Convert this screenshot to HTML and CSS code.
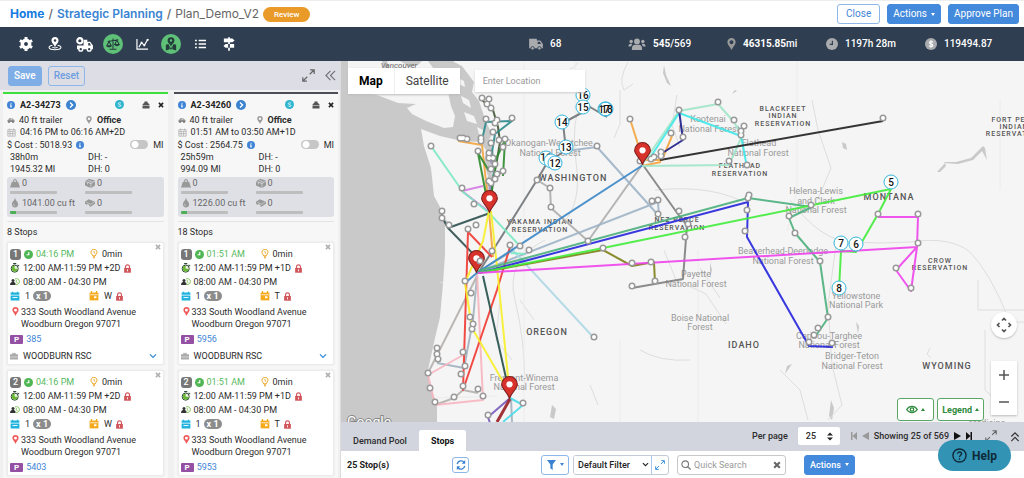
FILE: index.html
```html
<!DOCTYPE html>
<html lang="en">
<head>
<meta charset="utf-8">
<title>Plan_Demo_V2 - Strategic Planning</title>
<link rel="stylesheet" href="styles.css">
</head>
<body>
<svg class="sprite" aria-hidden="true">
  <symbol id="info" viewBox="0 0 16 16"><circle cx="8" cy="8" r="8" fill="#4285d6"/><path d="M6 7h3v4h1v1.500H6V11h1V8.500H6zM7 3.500h2v2H7z" fill="#fff"/></symbol>
  <symbol id="go" viewBox="0 0 16 16"><circle cx="8" cy="8" r="8" fill="#3b82d0"/><path d="M6.500 4l4 4-4 4" fill="none" stroke="#fff" stroke-width="2.200"/></symbol>
  <symbol id="cash" viewBox="0 0 16 16"><circle cx="8" cy="8" r="8" fill="#2fb5cf"/><path d="M10.500 6C10 4.500 6 4.500 6 6.500S10.500 8 10.500 10 6 11.700 5.500 10" fill="none" stroke="#fff" stroke-width="1.500"/></symbol>
  <symbol id="eject" viewBox="0 0 16 16"><path d="M5 3V1h6v2zM1 7l4-4h6l4 4v1.500H1zM1 9.500h14V15H1z" fill="#555"/></symbol>
  <symbol id="x" viewBox="0 0 10 10"><path d="M1.500 1.500l7 7M8.500 1.500l-7 7" stroke="currentColor" stroke-width="2.600"/></symbol>
  <symbol id="car" viewBox="0 0 16 16"><path d="M1 8l2-1 2-3h5l3 3 2 1v4H1z" fill="#909090"/><path d="M5 7l1-2h1v2zM8 5h2l1 2H8z" fill="#fff"/><circle cx="4" cy="12" r="2" fill="#777"/><circle cx="12" cy="12" r="2" fill="#777"/></symbol>
  <symbol id="pin" viewBox="0 0 12 16"><path fill-rule="evenodd" d="M6 0a5.500 5.500 0 0 1 5.500 5.500C11.500 9 7.500 12 6 16 4.500 12 .5 9 .5 5.500A5.500 5.500 0 0 1 6 0zm0 3a2.600 2.600 0 1 0 0 5.200A2.600 2.600 0 0 0 6 3z" fill="currentColor"/></symbol>
  <symbol id="cal" viewBox="0 0 16 16"><path d="M1.500 3h13v11.500h-13zM1.500 6h13M5.500 6v8M10 6v8M1.500 10h13M4.500 1v3M11.500 1v3" fill="none" stroke="#aaa" stroke-width="1.300"/></symbol>
  <symbol id="weight" viewBox="0 0 16 16"><path fill-rule="evenodd" d="M3 6h2a3.200 3.200 0 1 1 6 0h2l3 9H0zM8 3.500A1.500 1.500 0 0 0 6.600 6h2.800A1.500 1.500 0 0 0 8 3.500z" fill="#999"/></symbol>
  <symbol id="cube" viewBox="0 0 16 16"><path d="M0 5l6-4 10 3-6 4zM0 6l9 3v7l-9-4zM10 9l6-4v7l-6 4z" fill="#999"/><path d="M4 7v3M4 3.500l8 3" stroke="#dfe0e6"/></symbol>
  <symbol id="drop" viewBox="0 0 16 16"><path d="M8 0c1 4 5 6 5 10A5 5 0 0 1 3 10C3 6 7 4 8 0z" fill="#999"/><path d="M5.500 9.500c0 2 1 3 2.500 3" fill="none" stroke="#ddd"/></symbol>
  <symbol id="pallet" viewBox="0 0 16 16"><path d="M0 6l6-4 10 4v3l-7 5-2-1V11L3 9.500V11L0 9z" fill="#999"/><path d="M2 7l7 3 6-4" fill="none" stroke="#ddd"/></symbol>
  <symbol id="clock" viewBox="0 0 16 16"><circle cx="8" cy="8" r="8" fill="#4fb653"/><path d="M8.500 3.500v5H4.500" fill="none" stroke="#fff" stroke-width="2"/></symbol>
  <symbol id="wait" viewBox="0 0 12 16"><path d="M3 9C1 7 1 5 1.500 3.500 3-.5 9-.5 10.500 3.500 11 6 10.500 7 9 9l-1 2H4z" fill="#fff" stroke="#e9a21b" stroke-width="1.600"/><path d="M6 3v3l2 1" fill="none" stroke="#e9a21b" stroke-width="1.400"/><path d="M4 12h4l-2 4z" fill="#e9a21b"/></symbol>
  <symbol id="watch" viewBox="0 0 16 16"><circle cx="7.500" cy="9" r="5.700" fill="#eef5e0" stroke="#2f4a3a" stroke-width="1.600"/><path d="M7.500 9V4.500A4.500 4.500 0 1 0 12 9z" fill="#67b832"/><path d="M5 1h5M12 3l2.500 2" stroke="#2f4a3a" stroke-width="2"/></symbol>
  <symbol id="shift" viewBox="0 0 20 16"><circle cx="6" cy="5" r="3" fill="#333"/><path d="M0 14c0-5 3-6 6-6s4 1 5 3v3z" fill="#333"/><path d="M10 2a6 6 0 1 1 1 11" fill="none" stroke="#6ab834" stroke-width="1.600"/><path d="M12.500 4v4l3 2" fill="none" stroke="#6ab834" stroke-width="1.400"/></symbol>
  <symbol id="day" viewBox="0 0 16 16"><path d="M1 2.500h14V6H1zM1 7h14v8H1z" fill="#1fb2de"/><path d="M4 1v2M12 1v2" stroke="#1fb2de" stroke-width="2"/><path d="M4 10.500h8" stroke="#fff" stroke-width="1.500"/></symbol>
  <symbol id="week" viewBox="0 0 16 16"><path d="M1 2.500h14V15H1z" fill="#f5aa1c"/><path d="M4 0v3M12 0v3" stroke="#f5aa1c" stroke-width="2"/><path d="M2 6h12" stroke="#fff" stroke-width="1.200"/><path d="M8 8.500h4v3H8z" fill="#fff"/></symbol>
  <symbol id="lock" viewBox="0 0 14 16"><path d="M3.500 8V5a3.500 3.500 0 0 1 7 0v3" fill="none" stroke="#d0565c" stroke-width="2"/><path d="M1 7h12v8.500H1z" fill="#d0565c"/><path d="M7 9.500v3.500" stroke="#fff" stroke-width="1.600"/></symbol>
  <symbol id="case" viewBox="0 0 16 16"><path d="M5 5V2.500h6V5M0 9V5h16v4z" fill="#aaa" stroke="#aaa"/><path d="M0 10.500h16V15H0z" fill="#aaa"/></symbol>
  <symbol id="down" viewBox="0 0 12 8"><path d="M1.500 1.500L6 6l4.500-4.500" fill="none" stroke="currentColor" stroke-width="1.800"/></symbol>
  <symbol id="expand" viewBox="0 0 16 16"><path d="M9.500 6.500L14.500 1.500M10 1h5v5M6.500 9.500l-5 5M6 15H1v-5" fill="none" stroke="currentColor" stroke-width="1.500"/></symbol>
  <symbol id="marker" viewBox="0 0 16 22"><path d="M8 .5A7.500 7.500 0 0 1 15.500 8c0 4.500-5.500 7-7.500 13.500C6 15 .5 12.500.5 8A7.500 7.500 0 0 1 8 .5z" fill="#d8322c" stroke="#7c1e1c"/><circle cx="8" cy="8" r="3" fill="#fff"/></symbol>
</svg>

<header class="top">
  <nav class="crumbs" aria-label="Breadcrumb">
    <a href="#" class="home">Home</a><span>/</span><a href="#">Strategic Planning</a><span>/</span><span class="plan">Plan_Demo_V2</span><span class="pill">Review</span>
  </nav>
  <div class="top-actions">
    <button class="btn outline">Close</button>
    <button class="btn solid">Actions <i class="caret"></i></button>
    <button class="btn solid">Approve Plan</button>
  </div>
</header>

<section class="bar">
  <nav class="tools" aria-label="Views">
    <button aria-label="Settings"><svg width="14" height="14" viewBox="0 0 16 16"><path fill="none" stroke="#fff" stroke-width="4" d="M8 3.800a4.200 4.200 0 1 0 .01 0z"/><path d="M8 0v3M8 13v3M1 4l2.700 1.500M12.300 10.500L15 12M1 12l2.700-1.500M12.300 5.500L15 4" stroke="#fff" stroke-width="3.400"/></svg></button>
    <button aria-label="Locations"><svg width="14" height="14" viewBox="0 0 16 16"><path fill-rule="evenodd" d="M8 0a4 4 0 0 1 4 4c0 3-3 4-4 8-1-4-4-5-4-8a4 4 0 0 1 4-4zm0 2.500a1.500 1.500 0 1 0 0 3 1.500 1.500 0 0 0 0-3z" fill="#fff"/><path d="M5 9.500c-6 1-5 5 3 5s9-4 3-5M5 11.500c1 1.400 5 1.400 6 0" fill="none" stroke="#fff" stroke-width="1.200"/></svg></button>
    <button aria-label="Trucks"><svg width="17" height="15" viewBox="0 0 18 16"><circle cx="4" cy="4" r="2.800" fill="none" stroke="#fff" stroke-width="2.200"/><path d="M8 3h4v2h3l3 4v4H1V9h7z" fill="#fff"/><path d="M13 6.500h1.500L16 9h-3z" fill="#2f3e50"/><circle cx="5" cy="13" r="2" fill="#2f3e50" stroke="#fff" stroke-width="1.500"/><circle cx="14" cy="13" r="2" fill="#2f3e50" stroke="#fff" stroke-width="1.500"/></svg></button>
    <button class="on" aria-label="Balance"><svg width="14" height="13" viewBox="0 0 16 14"><path d="M8 0v12M4 12.500h8M2 3.500l12-2M3.500 3.500L1 8.500h5zM12.500 2L10 7h5z" fill="none" stroke="#243c3c" stroke-width="1.200"/><path d="M.5 8.500h6c-1 2.500-5 2.500-6 0zM9.500 7h6c-1 2.500-5 2.500-6 0z" fill="#243c3c"/></svg></button>
    <button aria-label="Charts"><svg width="13" height="12" viewBox="0 0 14 13"><path d="M1 1v11h12M3 10l3-5 3 3 4-7" fill="none" stroke="#fff" stroke-width="1.300"/><path d="M5 4h2v2H5zM8 7h2v2H8zM11.500 1h2v2h-2z" fill="#fff"/></svg></button>
    <button class="on" aria-label="Map"><svg width="12" height="14" viewBox="0 0 14 16"><path fill-rule="evenodd" d="M7 0a4 4 0 0 1 4 4c0 3-3 4-4 7-1-3-4-4-4-7a4 4 0 0 1 4-4zm0 2.500a1.500 1.500 0 1 0 0 3 1.500 1.500 0 0 0 0-3z" fill="#243c3c"/><path d="M1 9l3-1 1.500 3v3L1 15.500zM8.500 11L10 8l3 1v6.500L8.500 14zM6 12h2v2H6z" fill="#243c3c"/></svg></button>
    <button aria-label="List"><svg width="11" height="10" viewBox="0 0 12 10"><path d="M0 1.200h2M0 5h2M0 8.800h2M4 1.200h8M4 5h8M4 8.800h8" stroke="#fff" stroke-width="1.700"/></svg></button>
    <button aria-label="Directions"><svg width="12" height="14" viewBox="0 0 14 16"><path d="M6 0h2v16H6zM1 1.500h10l2.500 2.300L11 6H1zM13 8H3L.5 10.200 3 12.500h10z" fill="#fff"/></svg></button>
  </nav>
  <ul class="stats">
    <li><svg width="14" height="12" viewBox="0 0 16 14"><path fill-rule="evenodd" d="M0 1h9v2h4l3 4v5H0zm10 3.500V7h4l-1.700-2.500z" fill="#a9abae"/><circle cx="4" cy="12" r="2" fill="#a9abae" stroke="#2f3e50"/><circle cx="12" cy="12" r="2" fill="#a9abae" stroke="#2f3e50"/></svg><span>68</span></li>
    <li><svg width="18" height="12" viewBox="0 0 20 14"><g fill="#a9abae"><circle cx="10" cy="4" r="3.400"/><circle cx="3.200" cy="4" r="2"/><circle cx="16.800" cy="4" r="2"/><path d="M4 14c0-6 2-6 6-6s6 0 6 6zM0 10c0-3 2-3.500 4.500-3L3 10zM20 10c0-3-2-3.500-4.500-3L17 10z"/></g></svg><span><b>545</b>/569</span></li>
    <li><svg class="grey" width="9" height="12"><use href="#pin"/></svg><span><b>46315.85</b>mi</span></li>
    <li><svg width="12" height="12" viewBox="0 0 16 16"><circle cx="8" cy="8" r="8" fill="#a9abae"/><path d="M8.500 3.500v5H5" fill="none" stroke="#2f3e50" stroke-width="1.600"/></svg><span>1197h 28m</span></li>
    <li><svg width="12" height="12" viewBox="0 0 16 16"><circle cx="8" cy="8" r="8" fill="#a9abae"/><path d="M10.500 6C10 4.300 5.800 4.300 5.800 6.300S10.500 8 10.500 10 6 11.700 5.500 10M8 3v10" fill="none" stroke="#fff" stroke-width="1.400"/></svg><span>119494.87</span></li>
  </ul>
</section>

<main class="work">
  <aside class="side">
    <div class="side-bar">
      <button class="btn save">Save</button>
      <button class="btn reset">Reset</button>
      <button class="icon push" aria-label="Expand"><svg width="13" height="13"><use href="#expand"/></svg></button>
      <button class="icon" aria-label="Collapse"><svg width="11" height="11" viewBox="0 0 12 12"><path d="M6 1L1 6l5 5M11 1L6 6l5 5" fill="none" stroke="#71747b" stroke-width="1.300"/></svg></button>
    </div>
    <div class="routes">
      <article class="route green">
        <div class="summary">
          <h2 class="line title"><svg class="s8"><use href="#info"/></svg><span>A2-34273</span><svg class="s10"><use href="#go"/></svg><svg class="s9 push"><use href="#cash"/></svg><svg class="s8 gap"><use href="#eject"/></svg><button class="icon" aria-label="Close route"><svg class="s6"><use href="#x"/></svg></button></h2>
          <p class="pair"><span class="line"><svg class="s8"><use href="#car"/></svg>40 ft trailer</span><span class="line"><svg class="s8 grey"><use href="#pin"/></svg><b>Office</b></span></p>
          <p class="line"><svg class="s9"><use href="#cal"/></svg>04:16 PM to 06:16 AM+2D</p>
          <div class="line cost">$ Cost : 5018.93 <svg class="s8"><use href="#info"/></svg><label class="push switch"><input type="checkbox"><span>MI</span></label></div>
          <p class="pair inset"><span>38h0m</span><span>DH: -</span></p>
          <p class="pair inset"><span>1945.32 MI</span><span>DH: 0</span></p>
          <div class="loads">
            <div class="load"><svg class="s10"><use href="#weight"/></svg><span>0</span><i></i></div>
            <div class="load"><svg class="s10"><use href="#cube"/></svg><span>0</span><i></i></div>
            <div class="load part"><svg class="s10"><use href="#drop"/></svg><span>1041.00 cu ft</span><i></i></div>
            <div class="load"><svg class="s10"><use href="#pallet"/></svg><span>0</span><i></i></div>
          </div>
          <p class="count">8 Stops</p>
        </div>
        <section class="stop">
          <div class="pair"><span class="line"><b class="num">1</b><svg class="s9"><use href="#clock"/></svg><span class="eta">04:16 PM</span></span><span class="line"><svg class="s10"><use href="#wait"/></svg>0min</span></div>
          <p class="line"><svg class="s10"><use href="#watch"/></svg>12:00 AM-11:59 PM +2D<svg class="s9"><use href="#lock"/></svg></p>
          <p class="line"><svg class="s10"><use href="#shift"/></svg>08:00 AM - 04:30 PM</p>
          <div class="pair"><span class="line"><svg class="s10"><use href="#day"/></svg><span>1</span><b class="times">x 1</b></span><span class="line"><svg class="s10"><use href="#week"/></svg><span>W</span><svg class="s9"><use href="#lock"/></svg></span></div>
          <address><svg class="s9"><use href="#pin"/></svg><span>333 South Woodland Avenue<br>Woodburn Oregon 97071</span></address>
          <p class="line"><b class="tag">P</b><a href="#">385</a></p>
          <p class="line site"><svg class="s8"><use href="#case"/></svg><span>WOODBURN RSC</span><button class="icon push blue" aria-label="More"><svg width="8" height="6"><use href="#down"/></svg></button></p>
          <button class="icon shut" aria-label="Remove stop"><svg class="s6"><use href="#x"/></svg></button>
        </section>
        <section class="stop">
          <div class="pair"><span class="line"><b class="num">2</b><svg class="s9"><use href="#clock"/></svg><span class="eta">04:16 PM</span></span><span class="line"><svg class="s10"><use href="#wait"/></svg>0min</span></div>
          <p class="line"><svg class="s10"><use href="#watch"/></svg>12:00 AM-11:59 PM +2D<svg class="s9"><use href="#lock"/></svg></p>
          <p class="line"><svg class="s10"><use href="#shift"/></svg>08:00 AM - 04:30 PM</p>
          <div class="pair"><span class="line"><svg class="s10"><use href="#day"/></svg><span>1</span><b class="times">x 1</b></span><span class="line"><svg class="s10"><use href="#week"/></svg><span>W</span><svg class="s9"><use href="#lock"/></svg></span></div>
          <address><svg class="s9"><use href="#pin"/></svg><span>333 South Woodland Avenue<br>Woodburn Oregon 97071</span></address>
          <p class="line"><b class="tag">P</b><a href="#">5403</a></p>
          <button class="icon shut" aria-label="Remove stop"><svg class="s6"><use href="#x"/></svg></button>
        </section>
      </article>
      <article class="route dark">
        <div class="summary">
          <h2 class="line title"><svg class="s8"><use href="#info"/></svg><span>A2-34260</span><svg class="s10"><use href="#go"/></svg><svg class="s9 push"><use href="#cash"/></svg><svg class="s8 gap"><use href="#eject"/></svg><button class="icon" aria-label="Close route"><svg class="s6"><use href="#x"/></svg></button></h2>
          <p class="pair"><span class="line"><svg class="s8"><use href="#car"/></svg>40 ft trailer</span><span class="line"><svg class="s8 grey"><use href="#pin"/></svg><b>Office</b></span></p>
          <p class="line"><svg class="s9"><use href="#cal"/></svg>01:51 AM to 03:50 AM+1D</p>
          <div class="line cost">$ Cost : 2564.75 <svg class="s8"><use href="#info"/></svg><label class="push switch"><input type="checkbox"><span>MI</span></label></div>
          <p class="pair inset"><span>25h59m</span><span>DH: -</span></p>
          <p class="pair inset"><span>994.09 MI</span><span>DH: 0</span></p>
          <div class="loads">
            <div class="load"><svg class="s10"><use href="#weight"/></svg><span>0</span><i></i></div>
            <div class="load"><svg class="s10"><use href="#cube"/></svg><span>0</span><i></i></div>
            <div class="load part"><svg class="s10"><use href="#drop"/></svg><span>1226.00 cu ft</span><i></i></div>
            <div class="load"><svg class="s10"><use href="#pallet"/></svg><span>0</span><i></i></div>
          </div>
          <p class="count">18 Stops</p>
        </div>
        <section class="stop">
          <div class="pair"><span class="line"><b class="num">1</b><svg class="s9"><use href="#clock"/></svg><span class="eta">01:51 AM</span></span><span class="line"><svg class="s10"><use href="#wait"/></svg>0min</span></div>
          <p class="line"><svg class="s10"><use href="#watch"/></svg>12:00 AM-11:59 PM +1D<svg class="s9"><use href="#lock"/></svg></p>
          <p class="line"><svg class="s10"><use href="#shift"/></svg>08:00 AM - 04:30 PM</p>
          <div class="pair"><span class="line"><svg class="s10"><use href="#day"/></svg><span>1</span><b class="times">x 1</b></span><span class="line"><svg class="s10"><use href="#week"/></svg><span>T</span><svg class="s9"><use href="#lock"/></svg></span></div>
          <address><svg class="s9"><use href="#pin"/></svg><span>333 South Woodland Avenue<br>Woodburn Oregon 97071</span></address>
          <p class="line"><b class="tag">P</b><a href="#">5956</a></p>
          <p class="line site"><svg class="s8"><use href="#case"/></svg><span>WOODBURN RSC</span><button class="icon push blue" aria-label="More"><svg width="8" height="6"><use href="#down"/></svg></button></p>
          <button class="icon shut" aria-label="Remove stop"><svg class="s6"><use href="#x"/></svg></button>
        </section>
        <section class="stop">
          <div class="pair"><span class="line"><b class="num">2</b><svg class="s9"><use href="#clock"/></svg><span class="eta">01:51 AM</span></span><span class="line"><svg class="s10"><use href="#wait"/></svg>0min</span></div>
          <p class="line"><svg class="s10"><use href="#watch"/></svg>12:00 AM-11:59 PM +1D<svg class="s9"><use href="#lock"/></svg></p>
          <p class="line"><svg class="s10"><use href="#shift"/></svg>08:00 AM - 04:30 PM</p>
          <div class="pair"><span class="line"><svg class="s10"><use href="#day"/></svg><span>1</span><b class="times">x 1</b></span><span class="line"><svg class="s10"><use href="#week"/></svg><span>T</span><svg class="s9"><use href="#lock"/></svg></span></div>
          <address><svg class="s9"><use href="#pin"/></svg><span>333 South Woodland Avenue<br>Woodburn Oregon 97071</span></address>
          <p class="line"><b class="tag">P</b><a href="#">5953</a></p>
          <button class="icon shut" aria-label="Remove stop"><svg class="s6"><use href="#x"/></svg></button>
        </section>
      </article>
    </div>
  </aside>

  <section class="content">
    <div class="map">
      <svg class="canvas" viewBox="341 61 683 361" preserveAspectRatio="xMinYMin slice" role="img" aria-label="Route map">
        <path fill="#f5f5f5" d="M341 61h683v361H341z"/>
        <path class="sea" d="M341 61H452L462 66 468 74 474 82 472 92 479 101 482 110 486 122 492 134 488 142 494 152 490 168 494 182 490 196 486 190 488 176 484 164 486 150 480 142 462 141 440 136 421 129 424 146 431 168 434 196 440 207 443 218 449 222 445 226 445 254 443 284 440 317 435 338 428 370 430 386 437 404 437 422H341z"/>
        <path class="land" d="M348 61H428L436 72 440 84 448 92 451 106 455 116 453 127 444 128 426 121 412 114 407 108 416 104 398 103 377 95 348 90zM458 78l6 3 1 6-6-3zM461 96l8 4 2 8-8-5zM464 112l10 4 3 8-10-3zM477 127l6 3 1 6-5-2z"/>
        <path class="sea" d="M382 61l2 8 5-2-2-6zM400 61l10 6 8-2 4-4zM431 62l8 8 12-3 3-6zM552 405l4 4-2 10-4-2zM710 262l2 8-2 8zM831 400l3 8-2 12-3-4zM856 322l3 4-1 8zM787 366l5-2-7 10zM937 172l8-9 1 3-6 6zM945 162l11 0 15-4 12-12 2 2 2 12-5-9-9 9-15 4-14-1zM664 65l2 10 5 11-4-3-4-10zM842 142l4 2 1 6-4-2zM735 90l-3 4 5-3z"/>
        <g class="hair">
          <path d="M628 62q-10 18-4 28l9-6M578 62q-5 8-8 6M584 92q-14 30-8 70t-12 60M677 95l-5 30 8 22M620 90v34l-6 14M655 190q60-6 96 16M790 200q30 40 60 42t60 0q40-6 60 10 20 20 40 70h34M812 100l6 30 13 38-10 24-10 20M836 245l-8 60 4 60 10 40-14 15M1024 310h-46v-30M985 330v60l16 15M700 268l20 30M590 385l8 20M520 300l14 20M545 240q-40 20-30 60t10 90M664 250l12 30 30 14 20 30M640 350q20 12 50 10M780 370l20 20 8 30M930 348l-3 6 4 4M500 300l-4 40 16 20M443 283l-3-1"/>
          <path class="pale" d="M524 61v361M575 61v60M797 61v130l-10 40M698 250v172M437 398l60-2M620 422V340M1000 100v90"/>
        </g>
        <g class="park">
          <text x="549" y="146">Okanogan-Wenatchee</text><text x="550" y="156">National Forest</text>
          <text x="708" y="122">Kootenai</text><text x="709" y="132">National Forest</text>
          <text x="759" y="146">Flathead</text><text x="758" y="156">National Forest</text>
          <text x="816" y="194">Helena-Lewis</text><text x="816" y="204">and Clark</text><text x="816" y="213">National Forest</text>
          <text x="783" y="254">Beaverhead-Deerlodge</text><text x="783" y="264">National Forest</text>
          <text x="696" y="277">Payette</text><text x="696" y="287">National Forest</text>
          <text x="700" y="321">Boise National</text><text x="700" y="330">Forest</text>
          <text x="856" y="299">Yellowstone</text><text x="856" y="308">National Park</text>
          <text x="829" y="339">Caribou-Targhee</text><text x="829" y="348">National Forest</text>
          <text x="852" y="359">Bridger-Teton</text><text x="852" y="369">National Forest</text>
          <text x="524" y="381">Fremont-Winema</text><text x="524" y="390">National Forest</text>
          <text x="987" y="426">Medicine</text>
        </g>
        <g class="reserve">
          <text x="783" y="111">BLACKFEET</text><text x="783" y="118">INDIAN</text><text x="783" y="126">RESERVATION</text>
          <text x="740" y="168">FLATHEAD</text><text x="740" y="176">RESERVATION</text>
          <text x="540" y="224">YAKAMA INDIAN</text><text x="540" y="232">RESERVATION</text>
          <text x="677" y="222">NEZ PERCE</text><text x="677" y="230">RESERVATION</text>
          <text x="940" y="263">CROW</text><text x="940" y="270">RESERVATION</text>
          <text x="1014" y="122">FORT PECK</text><text x="1014" y="129">INDIAN</text><text x="1014" y="136">RESERVATION</text>
        </g>
        <g class="state">
          <text x="573" y="181">WASHINGTON</text><text x="547" y="335">OREGON</text><text x="744" y="348">IDAHO</text><text x="889" y="200">MONTANA</text><text x="947" y="369">WYOMING</text>
        </g>
        <text class="city" x="399" y="68">Vancouver</text>
        <text class="google" x="347" y="427">Google</text>
        <g class="lines">
          <path stroke="#adadad" d="M537 180L550 188 551 208 588 241 642 165"/>
          <path stroke="#707478" d="M480 270L495 247 537 180 547 163 566 150 563 123 585 111 590 107 607 117"/>
          <path stroke="#9fb4c8" d="M566 151L597 147 659 216 658 202 478 272M514 250L478 272"/>
          <path stroke="#b5b0ad" d="M477 276L428 373M463 390L478 393M463 390L454 398 435 405"/>
          <path stroke="#a2b2bf" d="M477 276L473 320 464 368 437 363M511 398L512 422"/>
          <path stroke="#f7b5c0" d="M477 272L483 400 435 405 428 375 463 355"/>
          <path stroke="#add8e6" d="M509 246L594 338"/>
          <path stroke="#2f4f4f" d="M442 211L442 217 448 228 490 213M448 228L481 262"/>
          <path stroke="#3d5631" d="M482 100L493 110 498 127 500 142 497 160 492 184 490 210"/>
          <path stroke="#2d8a8b" d="M482 140L486 122 512 121 495 134 492 152 494 170 490 205"/>
          <path stroke="#9d8bc9" d="M488 157L493 165 495 175 490 185 491 208"/>
          <path stroke="#f3a43d" d="M458 141L482 145 488 200 493 257M630 119L643 160 662 160 672 136M642 166L661 162"/>
          <path stroke="#2d8a2c" d="M489 210L478 153 489 171M505 140L503 176M505 140L497 157 489 210"/>
          <path stroke="#d57be5" d="M483 186L462 191 488 211"/>
          <path stroke="#7be9c3" d="M431 146L463 192 488 212 520 246M511 253L525 254"/>
          <path stroke="#ef3832" d="M492 257L468 232 463 390 497 290 510 247"/>
          <path stroke="#f7ef28" d="M489 211L483 241 465 283 472 328 505 385M491 211L497 267 510 397"/>
          <path stroke="#234f49" d="M483 276L506 378 510 397"/>
          <path stroke="#808080" d="M643 165L680 217 687 225 683 279 632 288"/>
          <path stroke="#808018" d="M478 273L603 250 632 266 654 262 655 283"/>
          <path stroke="#3b87c6" d="M465 283L478 272 643 165"/>
          <path stroke="#4aaf7c" d="M478 271L748 198 812 207 789 218 795 233 820 262 828 318 815 337"/>
          <path stroke="#2525dd" d="M479 273L748 202 747 237 809 346 833 347"/>
          <path stroke="#42ec3c" d="M478 273L603 248 891 189 878 214 859 247 856 252 841 251 839 290"/>
          <path stroke="#ee42ec" d="M478 273L917 247 918 217 878 217M917 247L896 270 911 291 917 247"/>
          <path stroke="#a0e6c8" d="M644 162L679 111 718 104 734 122 742 136 729 165 642 166"/>
          <path stroke="#3fe8e8" d="M650 158L679 113 741 136 747 167"/>
          <path stroke="#1c1c8c" d="M679 110L683 140 664 152"/>
          <path stroke="#202020" d="M660 160L883 121"/>
          <path stroke="#48dbe9" d="M510 398L523 405 503 422"/>
          <path stroke="#7659bd" d="M509 399L488 417 490 423"/>
          <path class="thick" stroke="#971f24" d="M510 399L497 422"/>
        </g>
        <path id="stops" class="dots" d="M482 98h0M489 99h0M487 104h0M491 108h0M486 119h0M497 120h0M495 123h0M512 118h0M460 138h0M463 138h0M467 139h0M481 138h0M481 141h0M493 132h0M499 140h0M505 139h0M503 147h0M491 143h0M478 151h0M489 153h0M489 158h0M493 158h0M495 164h0M491 169h0M503 171h0M497 174h0M489 181h0M495 179h0M491 183h0M431 146h0M462 188h0M474 204h0M442 211h0M442 218h0M449 225h0M468 229h0M476 225h0M492 251h0M510 245h0M520 246h0M529 250h0M465 281h0M471 293h0M470 317h0M473 324h0M472 329h0M463 352h0M465 366h0M461 374h0M463 386h0M437 348h0M437 354h0M438 359h0M428 373h0M430 388h0M435 402h0M454 397h0M478 389h0M483 396h0M523 403h0M488 415h0M537 180h0M550 188h0M551 207h0M588 241h0M603 248h0M597 146h0M652 201h0M658 200h0M658 214h0M630 119h0M671 133h0M683 137h0M679 110h0M718 102h0M734 120h0M744 126h0M741 131h0M741 135h0M729 161h0M747 165h0M661 152h0M661 156h0M654 157h0M651 159h0M640 161h0M679 211h0M688 224h0M685 237h0M632 263h0M651 262h0M655 281h0M632 286h0M749 195h0M748 198h0M747 210h0M745 231h0M811 205h0M789 216h0M795 233h0M820 261h0M828 317h0M818 328h0M814 335h0M809 342h0M832 343h0M878 214h0M918 214h0M918 243h0M896 268h0M911 288h0M883 118h0M594 337h0"/>
        <path class="dots in" d="M482 98h0M489 99h0M487 104h0M491 108h0M486 119h0M497 120h0M495 123h0M512 118h0M460 138h0M463 138h0M467 139h0M481 138h0M481 141h0M493 132h0M499 140h0M505 139h0M503 147h0M491 143h0M478 151h0M489 153h0M489 158h0M493 158h0M495 164h0M491 169h0M503 171h0M497 174h0M489 181h0M495 179h0M491 183h0M431 146h0M462 188h0M474 204h0M442 211h0M442 218h0M449 225h0M468 229h0M476 225h0M492 251h0M510 245h0M520 246h0M529 250h0M465 281h0M471 293h0M470 317h0M473 324h0M472 329h0M463 352h0M465 366h0M461 374h0M463 386h0M437 348h0M437 354h0M438 359h0M428 373h0M430 388h0M435 402h0M454 397h0M478 389h0M483 396h0M523 403h0M488 415h0M537 180h0M550 188h0M551 207h0M588 241h0M603 248h0M597 146h0M652 201h0M658 200h0M658 214h0M630 119h0M671 133h0M683 137h0M679 110h0M718 102h0M734 120h0M744 126h0M741 131h0M741 135h0M729 161h0M747 165h0M661 152h0M661 156h0M654 157h0M651 159h0M640 161h0M679 211h0M688 224h0M685 237h0M632 263h0M651 262h0M655 281h0M632 286h0M749 195h0M748 198h0M747 210h0M745 231h0M811 205h0M789 216h0M795 233h0M820 261h0M828 317h0M818 328h0M814 335h0M809 342h0M832 343h0M878 214h0M918 214h0M918 243h0M896 268h0M911 288h0M883 118h0M594 337h0"/>
        <g class="seq">
          <circle cx="583" cy="95" r="7"/><text x="583" y="99">16</text>
          <circle cx="583" cy="107" r="7"/><text x="583" y="111">15</text>
          <circle cx="605" cy="109" r="7"/><text x="604" y="113">17</text>
          <circle class="ring" cx="606" cy="109" r="7"/><text x="607" y="113">18</text>
          <circle cx="562" cy="122" r="7"/><text x="562" y="126">14</text>
          <circle cx="546" cy="158" r="7"/><text x="546" y="161">11</text>
          <circle cx="551" cy="161" r="7"/>
          <circle cx="555" cy="163" r="7"/><text x="555" y="167">12</text>
          <circle cx="566" cy="147" r="7"/><text x="566" y="151">13</text>
          <circle cx="891" cy="182" r="7"/><text x="891" y="186">5</text>
          <circle cx="856" cy="244" r="7"/><text x="856" y="248">6</text>
          <circle cx="841" cy="243" r="7"/><text x="841" y="247">7</text>
          <circle cx="839" cy="288" r="7"/><text x="839" y="292">8</text>
        </g>
        <use href="#marker" x="481" y="190" width="17" height="23"/>
        <use href="#marker" x="468" y="250" width="17" height="23"/>
        <use href="#marker" x="634" y="142" width="17" height="23"/>
        <use href="#marker" x="501" y="376" width="17" height="23"/>
        <path class="dots" d="M480 261h0"/><path class="dots in" d="M480 261h0"/>
      </svg>
      <div class="map-top">
        <div class="types"><button class="active">Map</button><button>Satellite</button></div>
        <input class="find" type="text" placeholder="Enter Location" aria-label="Enter Location">
      </div>
      <div class="map-end">
        <button class="key eye" aria-label="Visibility"><svg width="12" height="9" viewBox="0 0 14 10"><path d="M.8 5C4 .2 10 .2 13.200 5 10 9.800 4 9.800.8 5z" fill="none" stroke="#2e8b3d" stroke-width="1.500"/><circle cx="7" cy="5" r="2" fill="none" stroke="#2e8b3d" stroke-width="1.500"/></svg><i class="caret up"></i></button>
        <button class="key">Legend <i class="caret up"></i></button>
        <div class="zoom">
          <button class="round" aria-label="Pan"><svg width="16" height="16" viewBox="0 0 16 16"><path d="M6 3.500l2-2 2 2M6 12.500l2 2 2-2M3.500 6l-2 2 2 2M12.500 6l2 2-2 2" fill="none" stroke="#555" stroke-width="1.700"/></svg></button>
          <div class="steps"><button aria-label="Zoom in"><svg width="12" height="12" viewBox="0 0 12 12"><path d="M6 1v10M1 6h10" stroke="#555" stroke-width="1.500"/></svg></button><button aria-label="Zoom out"><svg width="12" height="12" viewBox="0 0 12 12"><path d="M1 6h10" stroke="#555" stroke-width="1.500"/></svg></button></div>
        </div>
      </div>
    </div>

    <div class="tabs">
      <button class="tab">Demand Pool</button>
      <button class="tab current">Stops</button>
      <div class="pager">
        <label for="per">Per page</label>
        <span class="field per"><select id="per"><option>25</option></select><svg width="6" height="9" viewBox="0 0 6 9"><path d="M0 3.500l3-3 3 3zM0 5.500l3 3 3-3z" fill="#222"/></svg></span>
        <button class="icon" aria-label="First page"><svg width="6" height="8" viewBox="0 0 6 8"><path d="M0 0h1.500v8H0zM6 0v8L1.500 4z" fill="#999"/></svg></button>
        <button class="icon" aria-label="Previous page"><svg width="7" height="8" viewBox="0 0 7 8"><path d="M7 0v8L0 4z" fill="#999"/></svg></button>
        <span class="shown">Showing 25 of 569</span>
        <button class="icon" aria-label="Next page"><svg width="7" height="8" viewBox="0 0 7 8"><path d="M0 0v8l7-4z" fill="#111"/></svg></button>
        <button class="icon" aria-label="Last page"><svg width="6" height="8" viewBox="0 0 6 8"><path d="M4.500 0H6v8H4.500zM0 0v8l4.500-4z" fill="#111"/></svg></button>
        <button class="icon wide" aria-label="Expand"><svg width="12" height="12"><use href="#expand"/></svg></button>
        <button class="icon wide" aria-label="Raise panel"><svg width="10" height="11" viewBox="0 0 10 12"><path d="M1 6l4-4 4 4M1 11l4-4 4 4" fill="none" stroke="#333" stroke-width="1.300"/></svg></button>
      </div>
    </div>
    <div class="grid-bar">
      <b class="total">25 Stop(s)</b>
      <button class="btn outline refresh" aria-label="Refresh"><svg width="10" height="10" viewBox="0 0 12 12"><path d="M1.500 5a4.700 4.700 0 0 1 8.500-2M10.500 7A4.700 4.700 0 0 1 2 9" fill="none" stroke="#3b82d0" stroke-width="1.600"/><path d="M11 0v4.500H6.800zM1 12V7.500h4.200z" fill="#3b82d0"/></svg></button>
      <div class="filters">
        <button class="btn outline funnel" aria-label="Filter"><svg width="9" height="10" viewBox="0 0 10 11"><path d="M0 0h10L6.300 5v6L3.700 9V5z" fill="#3b82d0"/></svg><i class="caret"></i></button>
        <div class="group"><span class="field pick"><select aria-label="Filter preset"><option>Default Filter</option></select><svg width="7" height="5"><use href="#down"/></svg></span><button class="icon blue" aria-label="Expand filter"><svg width="10" height="10"><use href="#expand"/></svg></button></div>
        <div class="search"><svg width="10" height="10" viewBox="0 0 12 12"><circle cx="5" cy="5" r="4" fill="none" stroke="#777" stroke-width="1.300"/><path d="M8 8l3.500 3.500" stroke="#777" stroke-width="1.500"/></svg><input type="text" placeholder="Quick Search" aria-label="Quick Search"><button class="icon" aria-label="Clear"><svg width="8" height="8"><use href="#x"/></svg></button></div>
        <button class="btn solid">Actions <i class="caret"></i></button>
      </div>
    </div>
  </section>
</main>
<button class="help"><svg width="15" height="15" viewBox="0 0 16 16"><circle cx="8" cy="8" r="7" fill="none" stroke="#0f2a38" stroke-width="1.500"/><path d="M6 6.200c0-2.600 4.200-2.400 4.200 0C10.200 7.700 8 7.700 8 9.600M8 11v1.500" fill="none" stroke="#0f2a38" stroke-width="1.500"/></svg>Help</button>
</body>
</html>
```
FILE: styles.css
```css
* { box-sizing: border-box; }
body { margin: 0; height: 100vh; display: flex; flex-direction: column; overflow: hidden; background: #fff; color: #2c2c2c; font: 9px/12px Roboto, "Liberation Sans", sans-serif; }
h2, p, ul { margin: 0; padding: 0; }
svg { display: block; flex: none; }
button, input, select { font: inherit; color: inherit; margin: 0; }
button { display: flex; align-items: center; justify-content: center; padding: 0; border: 0; background: none; white-space: nowrap; cursor: pointer; }
a { color: #4285d6; text-decoration: none; }
b { font-weight: 700; }
.sprite { position: absolute; width: 0; height: 0; }
.push { margin-left: auto; }
.grey { color: #999; }
.s6 { width: 6px; height: 6px; }
.s8 { width: 8px; height: 8px; }
.s9 { width: 9px; height: 9px; }
.s10 { width: 10px; height: 10px; }
.icon { color: #666; }
.icon.blue { color: #2f8bd8; }
.caret { border: 2px solid transparent; border-top: 3px solid currentColor; border-bottom: 0; margin-left: 4px; }
.caret.up { border-top: 0; border-bottom: 3px solid currentColor; }

.btn { height: 20px; padding: 0 5px; border: 1px solid #8db7e8; border-radius: 3px; font-size: 10px; font-weight: 500; }
.btn.solid { background: #4389dc; border-color: #4389dc; color: #fff; }
.btn.outline { background: #fff; color: #4285d6; }

.top { display: flex; justify-content: space-between; align-items: center; height: 27px; padding: 0 5px 0 10px; border-top: 1px solid #eee; }
.crumbs { display: flex; align-items: center; font: 500 12px/16px Inter, sans-serif; color: #666; }
.crumbs a { font-weight: 600; color: #3a84d2; }
.crumbs .home { color: #167be0; font-weight: 700; }
.crumbs span { margin-left: 4px; }
.crumbs a + span + a { margin-left: 4px; }
.crumbs .plan { font-weight: 400; }
.crumbs .pill { padding: 0 11px; border-radius: 8px; background: #ea9a28; color: #fff; font: 500 8px/15px Roboto, sans-serif; }
.top-actions { display: flex; gap: 7px; }
.top-actions .btn { font-weight: 400; }
.top-actions .outline { padding: 0 8px; }

.bar { display: flex; justify-content: space-between; height: 34px; background: #2f3e50; color: #fff; }
.tools { display: flex; align-items: center; gap: 9px; padding-left: 16px; }
.tools button { width: 20px; height: 20px; border-radius: 50%; }
.tools .on { background: #5fc078; }
.stats { display: grid; grid-template-columns: repeat(5, 99px); align-items: center; list-style: none; font-size: 10px; }
.stats li { display: flex; align-items: center; gap: 7px; }
.stats span { font-weight: 500; }

.work { flex: 1; min-height: 0; display: grid; grid-template-columns: 341px 1fr; }
.side { display: flex; flex-direction: column; min-height: 0; background: #f0f0f1; border-right: 1px solid #dcdcdf; }
.side-bar { flex: none; display: flex; align-items: center; gap: 6px; height: 29px; padding: 0 4px 0 8px; background: #dddde5; }
.side-bar .icon + .icon { margin-left: 4px; }
.save { background: #7faee6; border-color: #7faee6; color: #fff; }
.reset { color: #6d9fe0; }
.routes { display: grid; grid-template-columns: 1fr 1fr; gap: 6px; padding: 2px 2px 0 3px; min-height: 0; overflow: hidden; }
.route { border-top: 2px solid #3ddf3d; background: #f7f7f7; }
.route.dark { border-color: #4b4c55; }
.summary { padding: 4px 4px 0; }
.line { display: flex; align-items: center; gap: 4px; white-space: nowrap; }
.title { height: 13px; margin-bottom: 3px; font-size: 9px; font-weight: 700; color: #222; }
.title span { padding: 0 1px; }
.title .gap { margin: 0 4px 0 14px; }
.title .icon { color: #222; }
.pair { display: grid; grid-template-columns: 78px 1fr; height: 12px; white-space: nowrap; }
.inset { padding-left: 3px; }
.cost { height: 13px; }
.switch { display: flex; align-items: center; gap: 5px; }
.switch input { appearance: none; width: 18px; height: 9px; border-radius: 5px; background: radial-gradient(circle at 5px 50%, #fff 3px, #c6c6c6 4px); }
.loads { display: grid; grid-template-columns: 75px 1fr; row-gap: 2px; margin: 2px 0 4px; padding: 0 0 2px 3px; height: 40px; border-radius: 3px; background: #dfe0e6; color: #666; }
.load { display: grid; grid-template-columns: 10px 1fr; column-gap: 2px; align-items: center; align-content: start; }
.load i { grid-column: 1 / 3; width: 47px; height: 3px; margin-top: 2px; border-radius: 1px; background: #bdbdbd; }
.load.part i { background: linear-gradient(to right, #4fae58 6px, #bdbdbd 6px); }
.count { border-top: 1px solid #e4e4e4; padding: 4px 0 4px; }

.stop { position: relative; margin: 0 4px 5px; padding: 5px 6px 2px 2px; border: 1px solid #ececec; border-radius: 2px; background: #fff; box-shadow: 0 0 2px #ddd; display: grid; row-gap: 2px; }
.stop .line { min-height: 12px; gap: 3px; }
.stop .pair { grid-template-columns: 79px 1fr; }
.num { width: 11px; background: #777; color: #fff; border-radius: 3px; text-align: center; font-weight: 500; line-height: 11px; }
.eta { color: #55b95b; }
.times { padding: 0 3px; border-radius: 5px; background: #8c8c8c; color: #fff; line-height: 10px; }
.stop .pair span > span:not(.eta) { padding-left: 2px; }
.stop address { display: flex; gap: 1px; padding-left: 1px; font-style: normal; color: #ef5b5b; margin: 2px 0 1px; }
.stop address span { color: #2c2c2c; }
.stop address svg { margin-top: 1px; }
.tag { padding: 0 4px; border-radius: 1px; background: #9450a3; color: #fff; font-size: 8px; line-height: 9px; }
.site { margin-top: 3px; }
.site span { padding-left: 2px; }
.shut { position: absolute; top: 1px; right: 2px; color: #b0b0b0; }

.content { min-width: 0; min-height: 0; display: flex; flex-direction: column; }
.map { position: relative; flex: 1; min-height: 0; overflow: hidden; background: #f5f5f5; }
.canvas { position: absolute; inset: 0; width: 100%; height: 100%; }
.canvas text { text-anchor: middle; }
.sea { fill: #c9c9c9; }
.land { fill: #f4f4f4; }
.hair path { fill: none; stroke: #dedede; }
.hair .pale { stroke: #ececec; }
.lines path { fill: none; stroke-width: 2; stroke-linejoin: round; opacity: .9; }
.lines .thick { stroke-width: 3; }
.dots { fill: none; stroke: #999; stroke-width: 7; stroke-linecap: round; }
.dots.in { stroke: #fff; stroke-width: 4; }
.park { font-size: 9px; fill: #999; }
.reserve { font-size: 7px; font-weight: 500; fill: #555; letter-spacing: 1px; }
.state { font-size: 9px; font-weight: 500; fill: #555; letter-spacing: 1px; }
.city { font-size: 8px; font-style: italic; fill: #666; }
.canvas .google { font-size: 14px; text-anchor: start; fill: #fff; stroke: #888; stroke-width: 2; paint-order: stroke; }
.seq circle { fill: #fff; stroke: #34b6dc; }
.seq .ring { fill: none; }
.seq text { font-size: 10px; font-weight: 500; fill: #111; }
.map-top { position: relative; display: flex; gap: 15px; padding: 7px; }
.types { display: flex; background: #fff; box-shadow: 0 1px 2px #bbb; }
.types button { height: 26px; padding: 0 11px; font-size: 12px; color: #444; }
.types .active { padding: 0 11px; border-right: 1px solid #eee; font-weight: 700; color: #000; }
.find { width: 110px; height: 22px; margin-top: 2px; padding: 0 8px; border: 0; background: #fff; box-shadow: 0 1px 2px #ccc; }
::placeholder { color: #999; opacity: 1; }
.map-end { position: absolute; right: 7px; bottom: 1px; display: flex; align-items: flex-end; gap: 3px; }
.key { height: 23px; padding: 0 4px; border: 1px solid #5aa765; border-radius: 3px; background: #fff; color: #2e8b3d; font-weight: 700; }
.key .caret { margin-left: 3px; }
.key.eye { width: 37px; }
.zoom { display: grid; justify-items: center; gap: 23px; margin: 0 0 6px 4px; }
.round { width: 26px; height: 26px; border-radius: 50%; background: #fff; box-shadow: 0 1px 2px #bbb; }
.steps { background: #fff; box-shadow: 0 1px 2px #bbb; }
.steps button { width: 26px; height: 27px; }

.tabs { flex: none; display: flex; align-items: flex-end; height: 29px; padding-right: 4px; background: #d3d5de; }
.tab { height: 21px; padding: 0 12px; font-weight: 500; }
.tab.current { background: #fff; font-weight: 700; color: #111; border-radius: 2px 2px 0 0; }
.pager { margin: 0 0 6px auto; display: flex; align-items: center; gap: 5px; font-weight: 500; }
.field { position: relative; display: flex; align-items: center; }
.field svg { position: absolute; right: 7px; pointer-events: none; }
.field select { appearance: none; border: 0; background: #fff; height: 18px; padding: 0 8px; border-radius: 2px; }
.per { margin: 0 6px 0 5px; }
.per select { width: 42px; }
.wide { margin-left: 8px; }
.grid-bar { flex: none; display: flex; align-items: center; height: 27px; padding: 0 6px; color: #222; }
.grid-bar .btn { font-size: 9px; }
.grid-bar .refresh { width: 17px; height: 16px; padding: 0; margin-left: 63px; }
.filters { display: flex; align-items: center; gap: 4px; margin-left: 72px; }
.funnel { width: 28px; padding: 0; }
.group { display: flex; border: 1px solid #c4cbd5; border-radius: 3px; }
.group > .icon { width: 17px; border-left: 1px solid #a9c8ec; }
.pick select { width: 77px; padding: 0 4px; font-weight: 500; }
.pick svg { right: 2px; }
.search { display: flex; align-items: center; gap: 3px; width: 109px; height: 20px; margin: 0 14px 0 4px; padding: 0 4px 0 3px; border: 1px solid #c8c8c8; border-radius: 3px; }
.search input { flex: 1; min-width: 0; padding: 0; border: 0; }
.help { position: absolute; right: 13px; bottom: 7px; gap: 5px; width: 73px; height: 31px; border-radius: 16px; background: #3293b4; color: #0f2a38; font-size: 12px; font-weight: 700; }
```
